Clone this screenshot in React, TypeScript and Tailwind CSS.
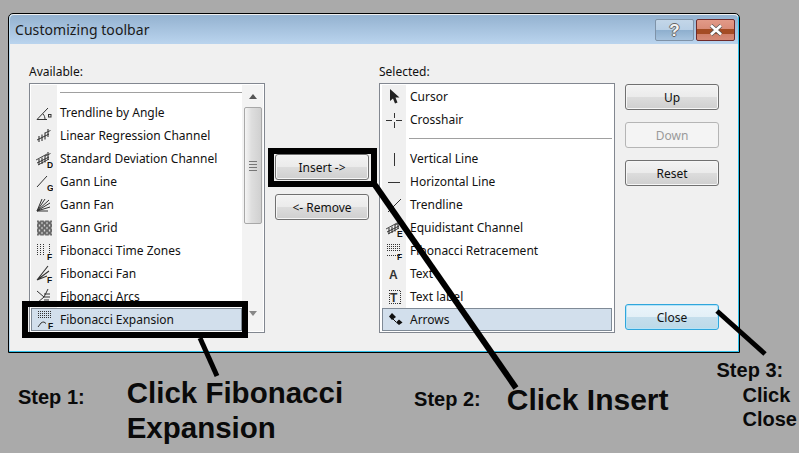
import type { ReactNode } from "react";

const ink = "#333";

function Glyph({ children }: { children: ReactNode }) {
  return (
    <svg width="18" height="18" viewBox="0 0 18 18" fill="none" stroke={ink} strokeWidth="1">
      {children}
    </svg>
  );
}

function Tag({ c }: { c: string }) {
  return (
    <text x="12" y="17.5" fontSize="8.500" fontWeight="700" fill="#111" stroke="none" fontFamily="Liberation Sans, sans-serif">
      {c}
    </text>
  );
}

const channel = (
  <>
    <path d="M2 13 14 7" strokeWidth="1" />
    <path d="M4 9v6M7 7.500v6.500M10 5.500v7M13 2v8" strokeWidth="1.100" />
    <path d="M10 6 15.500 3.500" strokeWidth="0.9" />
  </>
);

const dots = (rows: number[]) => (
  <g stroke="#333" strokeDasharray="1 1" shapeRendering="crispEdges">
    {rows.map((y) => (
      <path key={y} d={`M2 ${y + 0.5}H15`} />
    ))}
  </g>
);

const icons: Record<string, ReactNode> = {
  angle: (
    <Glyph>
      <path d="M2 15.500 13 4M2 15.500h10M8 10c1.500 1.500 2 3.500 2 5.500" />
      <rect x="13.500" y="10.500" width="2.500" height="2.500" />
    </Glyph>
  ),
  regression: <Glyph>{channel}</Glyph>,
  deviation: (
    <Glyph>
      {channel}
      <path d="M1 10 12 4M3 15l11-6" strokeWidth="0.9" />
      <Tag c="D" />
    </Glyph>
  ),
  gannLine: (
    <Glyph>
      <path d="M2 14 12 3" />
      <Tag c="G" />
    </Glyph>
  ),
  gannFan: (
    <Glyph>
      <path d="M2 15 7 3M2 15l8-12M2 15 14 4M2 15l13-8M2 15l13-4M2 15h11" />
    </Glyph>
  ),
  grid: (
    <svg width="18" height="18" viewBox="0 0 18 18">
      <defs>
        <pattern id="gann-grid" x="2" y="1.500" width="5" height="5" patternUnits="userSpaceOnUse">
          <path d="M0 0 5 5M5 0 0 5" stroke="#666" strokeWidth="2" />
        </pattern>
      </defs>
      <rect x="2" y="1.500" width="15" height="15" fill="url(#gann-grid)" />
    </svg>
  ),
  zones: (
    <Glyph>
      <g stroke="#333" strokeDasharray="1 1" shapeRendering="crispEdges">
        <path d="M2.500 2v12M5.500 2v12M8.500 2v12M14.500 2v9" />
      </g>
      <Tag c="F" />
    </Glyph>
  ),
  fibFan: (
    <Glyph>
      <path d="M2 15 13 1M2 15 14 6M2 15l10-4" strokeWidth="1.100" />
      <Tag c="F" />
    </Glyph>
  ),
  arcs: (
    <Glyph>
      <path d="M2 3l7 6M9 9l4-8M2 15l7-6M9 6h6M9 9h6M9 12h5" />
    </Glyph>
  ),
  expansion: (
    <Glyph>
      {dots([0, 2, 4, 6])}
      <path d="M2 16l3-4q1-1 3-1l2 1.500" />
      <Tag c="F" />
    </Glyph>
  ),
  cursor: (
    <svg width="18" height="18" viewBox="0 0 18 18">
      <path d="M5 1v12l3-2.500 2 5 2.500-1-2-5h4z" fill="#222" />
    </svg>
  ),
  crosshair: (
    <Glyph>
      <path d="M1 9.500h6M11 9.500h6M9.500 2v5M9.500 11v6" shapeRendering="crispEdges" />
    </Glyph>
  ),
  vertical: (
    <Glyph>
      <path d="M9.500 3v13" shapeRendering="crispEdges" />
    </Glyph>
  ),
  horizontal: (
    <Glyph>
      <path d="M3 9.500h12" shapeRendering="crispEdges" />
    </Glyph>
  ),
  trend: (
    <Glyph>
      <path d="M3 16 16 3" />
    </Glyph>
  ),
  equidistant: (
    <Glyph>
      {channel}
      <path d="M1 10 12 4M3 15l11-6" strokeWidth="0.9" />
      <Tag c="E" />
    </Glyph>
  ),
  retracement: (
    <Glyph>
      {dots([2, 4, 6, 8, 13])}
      <Tag c="F" />
    </Glyph>
  ),
  text: (
    <svg width="18" height="18" viewBox="0 0 18 18">
      <text x="4" y="14" fontSize="12" fontWeight="700" fill="#333" fontFamily="Liberation Sans, sans-serif">
        A
      </text>
    </svg>
  ),
  label: (
    <Glyph>
      <path d="M3.500 2.500h12v13h-11v-12" strokeDasharray="1 1" shapeRendering="crispEdges" />
      <text x="5" y="14" fontSize="12" fontWeight="700" fill="#333" stroke="none" fontFamily="Liberation Sans, sans-serif">
        T
      </text>
    </Glyph>
  ),
  arrows: (
    <svg width="18" height="18" viewBox="0 0 18 18">
      <path d="M6 2l4 4-4 3-3-3.500z" fill="#111" />
      <path d="M7 8l3 3" stroke="#111" />
      <path d="M13 8.500l3.500 3L13 14l-3-2.500z" fill="#111" />
    </svg>
  ),
};

type Row = { icon: string; label: string; selected?: boolean };

const available: Row[] = [
  { icon: "angle", label: "Trendline by Angle" },
  { icon: "regression", label: "Linear Regression Channel" },
  { icon: "deviation", label: "Standard Deviation Channel" },
  { icon: "gannLine", label: "Gann Line" },
  { icon: "gannFan", label: "Gann Fan" },
  { icon: "grid", label: "Gann Grid" },
  { icon: "zones", label: "Fibonacci Time Zones" },
  { icon: "fibFan", label: "Fibonacci Fan" },
  { icon: "arcs", label: "Fibonacci Arcs" },
  { icon: "expansion", label: "Fibonacci Expansion", selected: true },
];

const selectedTop: Row[] = [
  { icon: "cursor", label: "Cursor" },
  { icon: "crosshair", label: "Crosshair" },
];

const selectedRest: Row[] = [
  { icon: "vertical", label: "Vertical Line" },
  { icon: "horizontal", label: "Horizontal Line" },
  { icon: "trend", label: "Trendline" },
  { icon: "equidistant", label: "Equidistant Channel" },
  { icon: "retracement", label: "Fibonacci Retracement" },
  { icon: "text", label: "Text" },
  { icon: "label", label: "Text label" },
  { icon: "arrows", label: "Arrows", selected: true },
];

function ListRow({ row, narrow }: { row: Row; narrow?: boolean }) {
  const strip = row.selected
    ? narrow
      ? "w-[23px]"
      : "w-[25px]"
    : narrow
      ? "w-[24px] bg-[#f0f0f0]"
      : "w-[26px] bg-[#f0f0f0]";
  return (
    <div className={`flex h-[23px] items-center ${row.selected ? "border border-[#7f8a96] bg-[#d2dfec]" : ""}`}>
      <div className={`flex h-full shrink-0 items-center justify-center ${strip}`}>{icons[row.icon]}</div>
      <span className={narrow ? "pl-[4px]" : "pl-[3px]"}>{row.label}</span>
    </div>
  );
}

function Button({ children, disabled, primary, className = "" }: { children: ReactNode; disabled?: boolean; primary?: boolean; className?: string }) {
  const look = primary
    ? "border-[#2fa6dc] bg-[linear-gradient(#eaf5fb_0%,#e3f0f7_48%,#c4deec_52%,#bcd9e8_100%)] shadow-[inset_0_0_0_1px_#b5e3f7]"
    : disabled
      ? "border-[#b5b5b5] bg-[#f4f4f4] text-[#9a9a9a]"
      : "border-[#707070] bg-[linear-gradient(#f3f3f3_0%,#ebebeb_48%,#dcdcdc_52%,#cfcfcf_100%)] shadow-[inset_0_0_0_1px_#f6f6f6]";
  return (
    <div className={`flex h-[26px] w-[94px] items-center justify-center rounded-[3px] border pt-px ${look} ${className}`}>
      {children}
    </div>
  );
}

function Scrollbar() {
  return (
    <div className="flex w-[21px] shrink-0 flex-col items-center bg-[#f3f3f3]">
      <div className="mt-[9px] h-0 w-0 border-x-[4px] border-b-[5px] border-x-transparent border-b-[#555]" />
      <div className="mt-[8px] flex h-[117px] w-[18px] flex-col items-center justify-center gap-[2px] rounded-[2px] border border-[#a8a8a8] bg-[linear-gradient(90deg,#f4f4f4,#dedede_40%,#d0d0d0)]">
        <div className="h-px w-[8px] bg-[#777]" />
        <div className="h-px w-[8px] bg-[#777]" />
        <div className="h-px w-[8px] bg-[#777]" />
        <div className="h-px w-[8px] bg-[#777]" />
      </div>
      <div className="mt-[87px] h-0 w-0 border-x-[4px] border-t-[5px] border-x-transparent border-t-[#888]" />
    </div>
  );
}

export default function App() {
  return (
    <div className="relative h-[453px] w-[799px] overflow-hidden bg-[#aaaaaa] pl-[8px] pt-[13px] text-[12px] leading-none text-[#111] [font-family:'Noto_Sans',sans-serif]">
      <div className="flex h-[340px] w-[732px] flex-col rounded-t-[5px] border border-black bg-[#f0f0f0] shadow-[inset_-1px_-1px_0_#2fc0ea,inset_1px_0_0_#bcdcf2]">
        <div className="mx-px mt-px flex h-[29px] shrink-0 items-center justify-between rounded-t-[4px] bg-[linear-gradient(#94b2d0,#bad4ee)] pl-[5px] pr-[3px]">
          <span className="text-[14px] tracking-[0.06px] text-[#1a1a1a]">Customizing toolbar</span>
          <div className="flex gap-[2px] self-start pt-[4px]">
            <div className="flex h-[22px] w-[39px] items-center justify-center rounded-[2px] border border-[#7f93a8] bg-[linear-gradient(#c3d6e8_0%,#b8cfe5_48%,#8eafce_52%,#a7c3de_100%)] text-[17px] font-bold text-[#f4f4f4] [font-family:'Liberation_Sans',sans-serif] [text-shadow:1px_0_0_#666,-1px_0_0_#666,0_1px_0_#666,0_-1px_0_#666]">
              ?
            </div>
            <div className="flex h-[22px] w-[39px] items-center justify-center rounded-[2px] border border-[#6f2a2a] bg-[linear-gradient(#e29a88_0%,#d98c78_44%,#a44c24_46%,#a44c24_70%,#d0806a_72%,#d58a76_100%)]">
              <svg width="14" height="12" viewBox="0 0 14 12">
                <path d="M2 1.500 12 10.500M12 1.500 2 10.500" stroke="#555" strokeWidth="4" />
                <path d="M2 1.500 12 10.500M12 1.500 2 10.500" stroke="#fff" strokeWidth="2.600" />
              </svg>
            </div>
          </div>
        </div>

        <div className="flex flex-1 pl-[20px] pt-[20px]">
          <div className="flex w-[236px] flex-col">
            <span className="mt-px h-[18px] leading-[14px]">Available:</span>
            <div className="flex h-[250px] border border-[#828790] bg-white p-px">
              <div className="min-w-0 flex-1 overflow-hidden">
                <div className="flex h-[16px]">
                  <div className="w-[26px] bg-[#f0f0f0]" />
                  <div className="ml-[3px] mt-[7px] h-px flex-1 bg-[#a0a0a0]" />
                </div>
                {available.map((row) => (
                  <ListRow key={row.label} row={row} />
                ))}
              </div>
              <Scrollbar />
            </div>
          </div>

          <div className="ml-[10px] flex w-[94px] flex-col pt-[90px]">
            <Button>Insert -&gt;</Button>
            <Button className="mt-[14px]">&lt;- Remove</Button>
          </div>

          <div className="ml-[10px] flex w-[236px] flex-col">
            <span className="mt-px h-[18px] leading-[14px]">Selected:</span>
            <div className="h-[250px] overflow-hidden border border-[#828790] bg-white px-[2px] py-px">
              {selectedTop.map((row) => (
                <ListRow key={row.label} row={row} narrow />
              ))}
              <div className="flex h-[16px]">
                <div className="w-[24px] bg-[#f0f0f0]" />
                <div className="ml-[3px] mt-[7px] h-px flex-1 bg-[#a0a0a0]" />
              </div>
              {selectedRest.map((row) => (
                <ListRow key={row.label} row={row} narrow />
              ))}
            </div>
          </div>

          <div className="ml-[10px] flex w-[94px] flex-col pt-[20px]">
            <Button>Up</Button>
            <Button disabled className="mt-[12px]">Down</Button>
            <Button className="mt-[12px]">Reset</Button>
            <Button primary className="mt-[118px]">Close</Button>
          </div>
        </div>
      </div>

      <div className="flex font-bold leading-none text-[#0a0a0a] [font-family:'Liberation_Sans',sans-serif]">
        <span className="ml-[10px] mt-[34px] text-[20px]">Step 1:</span>
        <div className="ml-[42px] mt-[22px] text-[29.5px] leading-[35px]">
          Click Fibonacci
          <br />
          Expansion
        </div>
        <span className="ml-[71px] mt-[36px] text-[20px]">Step 2:</span>
        <span className="ml-[26px] mt-[32px] text-[30px]">Click Insert</span>
        <div className="ml-[48px] mt-[5px] text-[20px] leading-[24.5px]">
          Step 3:
          <div className="ml-[26px]">
            Click
            <br />
            Close
          </div>
        </div>
      </div>

      {/* callout boxes and leader lines drawn over the dialog */}
      <div className="pointer-events-none absolute left-[22px] top-[301px] h-[37px] w-[226px] border-[6px] border-black" />
      <div className="pointer-events-none absolute left-[268px] top-[148px] h-[39px] w-[109px] border-[6px] border-black" />
      <svg className="pointer-events-none absolute left-0 top-0" width="799" height="453" viewBox="0 0 799 453">
        <path d="M200 338 217 376" stroke="#000" strokeWidth="5" />
        <path d="M375 185 516 388" stroke="#000" strokeWidth="6" />
        <path d="M717 311 765 354" stroke="#000" strokeWidth="5" />
      </svg>
    </div>
  );
}
